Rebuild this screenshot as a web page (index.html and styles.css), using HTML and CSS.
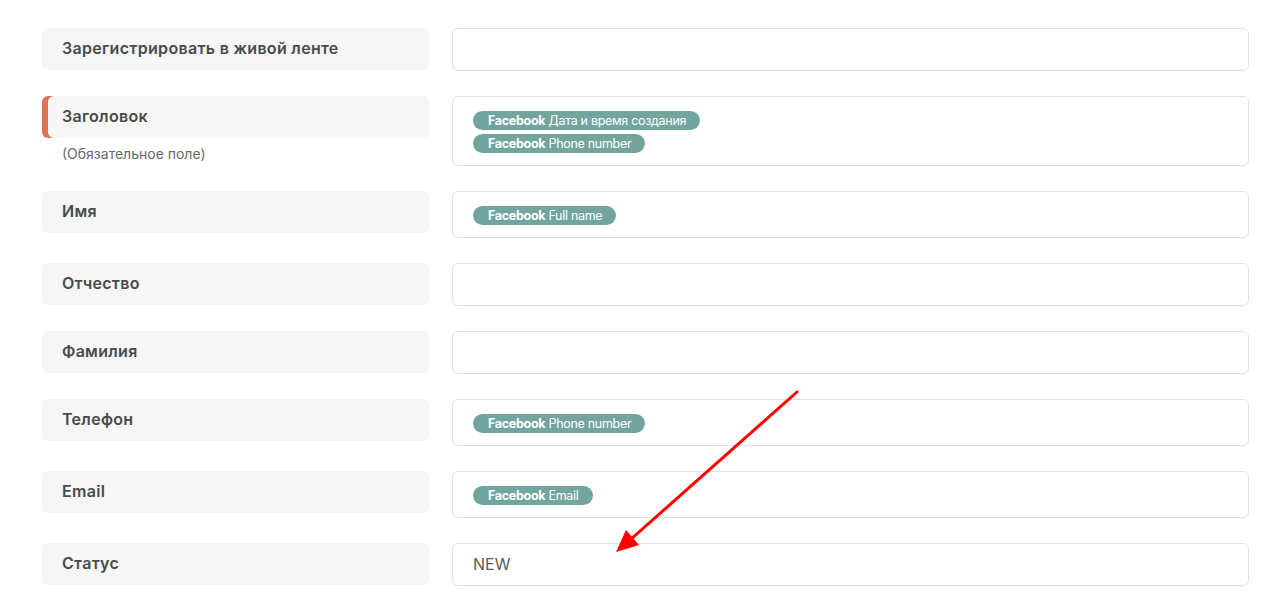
FILE: index.html
```html
<!DOCTYPE html>
<html lang="ru">
<head>
<meta charset="utf-8">
<title>Поля</title>
<link rel="stylesheet" href="styles.css">
</head>
<body>
<div class="page">
  <div class="form">
    <div class="row">
      <div class="label-col"><div class="label">Зарегистрировать в живой ленте</div></div>
      <div class="field"></div>
    </div>
    <div class="row">
      <div class="label-col">
        <div class="label required">Заголовок</div>
        <div class="hint">(Обязательное поле)</div>
      </div>
      <div class="field tags">
        <span class="tag"><b>Facebook</b> Дата и время создания</span>
        <span class="tag"><b>Facebook</b> Phone number</span>
      </div>
    </div>
    <div class="row">
      <div class="label-col"><div class="label">Имя</div></div>
      <div class="field tags"><span class="tag"><b>Facebook</b> Full name</span></div>
    </div>
    <div class="row">
      <div class="label-col"><div class="label">Отчество</div></div>
      <div class="field"></div>
    </div>
    <div class="row">
      <div class="label-col"><div class="label">Фамилия</div></div>
      <div class="field"></div>
    </div>
    <div class="row">
      <div class="label-col"><div class="label">Телефон</div></div>
      <div class="field tags"><span class="tag"><b>Facebook</b> Phone number</span></div>
    </div>
    <div class="row">
      <div class="label-col"><div class="label">Email</div></div>
      <div class="field tags"><span class="tag"><b>Facebook</b> Email</span></div>
    </div>
    <div class="row">
      <div class="label-col"><div class="label">Статус</div></div>
      <div class="field text">NEW</div>
    </div>
  </div>
  <svg class="arrow" width="1276" height="603" viewBox="0 0 1276 603">
    <line x1="797" y1="392" x2="630" y2="540" stroke="#ff0000" stroke-width="3" stroke-linecap="round"/>
    <polygon points="616,552 626,530 639,545" fill="#ff0000"/>
  </svg>
</div>
</body>
</html>
```
FILE: styles.css
```css
html, body {
  margin: 0;
  padding: 0;
  background: #ffffff;
}
.page {
  position: relative;
  width: 1276px;
  height: 603px;
  overflow: hidden;
  font-family: Inter, "Noto Sans", sans-serif;
}
.form {
  display: flex;
  flex-direction: column;
  gap: 25px;
  padding: 28px 0 0 42px;
}
.row {
  display: grid;
  grid-template-columns: 387px 797px;
  column-gap: 23px;
  align-items: start;
}
.label-col {
  display: flex;
  flex-direction: column;
}
.label {
  height: 42px;
  box-sizing: border-box;
  background: #f6f6f6;
  border-radius: 6px;
  padding: 0 20px 2px;
  display: flex;
  align-items: center;
  font-size: 16px;
  font-weight: 600;
  letter-spacing: 0.3px;
  color: #474b4b;
}
.label.required {
  box-shadow: inset 6px 0 0 #e07357;
}
.hint {
  padding: 7px 0 0 20px;
  font-size: 14px;
  color: #666a6a;
  line-height: 17px;
}
.field {
  box-sizing: border-box;
  min-height: 43px;
  border: 1px solid #e1e1e1;
  border-radius: 6px;
  background: #fff;
}
.field.tags {
  padding: 14px 20px 12px;
  display: flex;
  flex-direction: column;
  align-items: flex-start;
  gap: 4px;
}
.tag {
  display: block;
  background: #72a59e;
  color: #fff;
  font-size: 12.5px;
  line-height: 19px;
  height: 19px;
  padding: 0 14px 0 15px;
  border-radius: 10px;
  white-space: nowrap;
  letter-spacing: -0.3px;
}
.tag b {
  font-weight: 700;
}
.field.text {
  display: flex;
  align-items: center;
  padding: 0 20px 2px;
  font-size: 16px;
  color: #5a5a5a;
}
.arrow {
  position: absolute;
  left: 0;
  top: 0;
  pointer-events: none;
}
```
